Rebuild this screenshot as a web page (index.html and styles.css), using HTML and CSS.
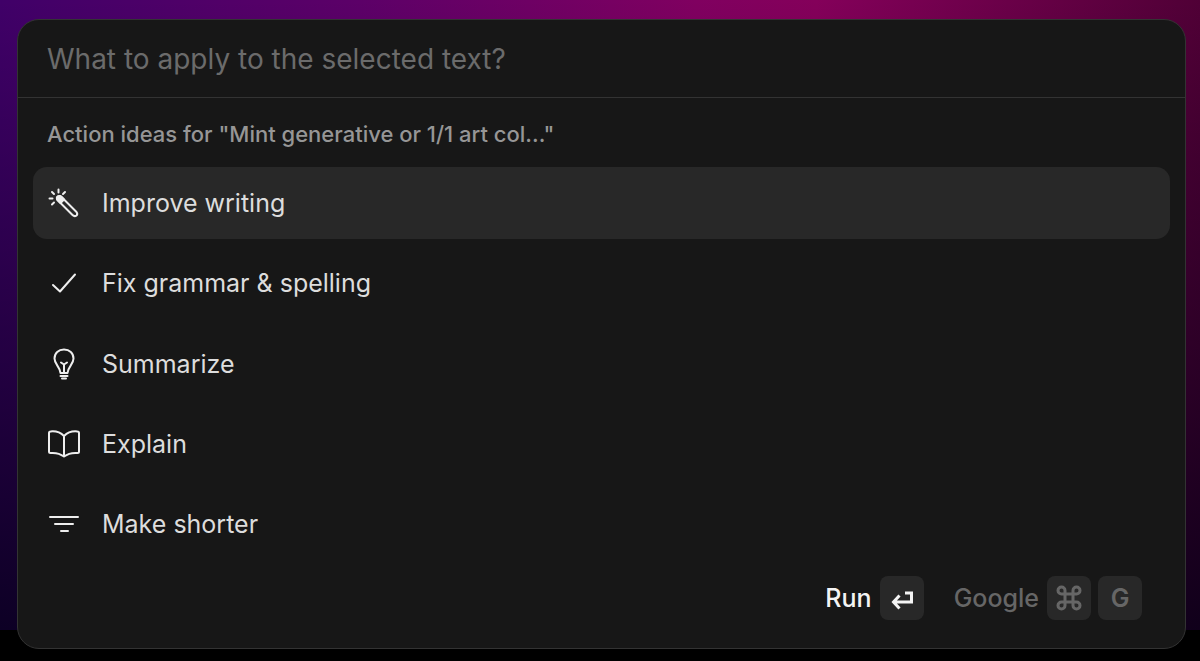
FILE: index.html
```html
<!DOCTYPE html>
<html lang="en">
  <head>
    <meta charset="UTF-8" />
    <meta name="viewport" content="width=device-width, initial-scale=1.0" />
    <title>Text actions</title>
    <link rel="stylesheet" href="styles.css">
  </head>
  <body>
    <main class="palette">
      <input type="text" class="search" aria-label="Action" placeholder="What to apply to the selected text?" />

      <section class="ideas">
        <h2 class="ideas-title">Action ideas for "Mint generative or 1/1 art col..."</h2>
        <ul class="actions">
          <li>
            <button type="button" class="action active">
              <svg class="icon" viewBox="0 0 32 32" aria-hidden="true">
                <path d="M9.500 13 Q8 10.500 10 9.500 Q12 8.500 13.500 10 L28.500 25 Q30 27 28.500 28.500 Q26.500 30 24.500 28 Z" />
                <path class="fill" d="M9.500 13 Q8 10.500 10 9.500 Q12 8.500 13.500 10 L16 12.500 L12.500 16 Z" />
                <path d="M10.500 2.500 V5.500 M4 5 L6 7 M1.500 11.500 H4.500 M4 17.500 L6 15.500 M17 5 L15 7" />
              </svg>
              Improve writing
            </button>
          </li>
          <li>
            <button type="button" class="action">
              <svg class="icon" viewBox="0 0 32 32" aria-hidden="true">
                <path d="M5 18 L12 24.500 L27 7.500" />
              </svg>
              Fix grammar &amp; spelling
            </button>
          </li>
          <li>
            <button type="button" class="action">
              <svg class="icon" viewBox="0 0 32 32" aria-hidden="true">
                <path d="M12.500 25 C12 18.500 6.500 16.500 6.500 10.500 C6.500 5 10.500 1.500 16 1.500 S25.500 5 25.500 10.500 C25.500 16.500 20 18.500 19.500 25 Z" />
                <path d="M13 14.500 L16 16.500 L19 14.500 M16 16.500 V24.500" />
                <path d="M12.500 28 H19.500 M14 30.500 H18" />
              </svg>
              Summarize
            </button>
          </li>
          <li>
            <button type="button" class="action">
              <svg class="icon" viewBox="0 0 32 32" aria-hidden="true">
                <path d="M16 8 C12 4 7 3 2.500 3.500 Q1 3.500 1 5 V23.500 Q1 25 2.500 25 C8 24.500 12 25.500 16 28.500 C20 25.500 24 24.500 29.500 25 Q31 25 31 23.500 V5 Q31 3.500 29.500 3.500 C25 3 20 4 16 8 Z M16 8 V28" />
              </svg>
              Explain
            </button>
          </li>
          <li>
            <button type="button" class="action">
              <svg class="icon" viewBox="0 0 32 32" aria-hidden="true">
                <path d="M2 9 H30 M7 16 H25 M13 23 H20" />
              </svg>
              Make shorter
            </button>
          </li>
        </ul>
      </section>

      <footer class="shortcuts">
        <button type="button" class="shortcut primary">
          Run
          <kbd class="key">
            <svg class="key-icon" viewBox="0 0 28 28" aria-hidden="true">
              <path d="M17 9 H23.500 V18 H6 M11.500 11.500 L5.500 18 L11.500 24.500" />
            </svg>
          </kbd>
        </button>
        <button type="button" class="shortcut">
          Google
          <span class="keys">
            <kbd class="key">
              <svg class="key-icon" viewBox="0 0 28 28" aria-hidden="true">
                <path d="M10 10 H18 V18 H10 Z M10 10 H6.500 A3.500 3.500 0 1 1 10 6.500 Z M18 10 V6.500 A3.500 3.500 0 1 1 21.500 10 Z M18 18 H21.500 A3.500 3.500 0 1 1 18 21.500 Z M10 18 V21.500 A3.500 3.500 0 1 1 6.500 18 Z" />
              </svg>
            </kbd>
            <kbd class="key">G</kbd>
          </span>
        </button>
      </footer>
    </main>
  </body>
</html>
```

FILE: styles.css
```css
* {
  box-sizing: border-box;
}
html {
  background-color: #000;
}
body {
  display: flex;
  min-height: 100vh;
  margin: 0;
  padding: 19px 14px 12px 17px;
  font-family: Inter, sans-serif;
  font-size: 25px;
  background-image: linear-gradient(rgba(0, 0, 20, 0), rgba(0, 0, 20, 0.8)),
    linear-gradient(90deg, #400068, #5c0068 30%, #800060 58%, #84005a 68%, #500036);
  background-size: 100% calc(100% - 31px);
  background-repeat: no-repeat;
}
button,
input {
  border: none;
  background: none;
  font: inherit;
}
.palette {
  display: flex;
  flex-direction: column;
  flex: 1;
  min-width: 0;
  border: 1px solid #333;
  border-radius: 22px;
  background-color: #171717;
  overflow: hidden;
}
.search {
  width: 100%;
  height: 78px;
  padding: 0 29px;
  border-bottom: 1px solid #333;
  color: #ddd;
  font-size: 28px;
  outline: none;
}
.search::placeholder {
  color: #6b6b6b;
  opacity: 1;
}
.ideas {
  display: flex;
  flex-direction: column;
  flex: 1;
  padding: 20px 15px 0;
}
.ideas-title {
  margin: 0 0 17px;
  padding: 0 14px;
  color: #969696;
  font-size: 22px;
  font-weight: 500;
  line-height: 32px;
}
.actions {
  display: flex;
  flex-direction: column;
  justify-content: space-between;
  gap: 8px;
  flex: 1;
  margin: 0;
  padding: 0;
  list-style: none;
}
.action {
  display: flex;
  align-items: center;
  gap: 22px;
  width: 100%;
  height: 72px;
  padding: 0 15px;
  border-radius: 14px;
  color: #ddd;
  text-align: left;
  cursor: pointer;
}
.action.active {
  background-color: #282828;
}
.icon {
  width: 32px;
  height: 32px;
  fill: none;
  stroke: #eee;
  stroke-width: 2;
  stroke-linecap: round;
  stroke-linejoin: round;
}
.icon .fill {
  fill: #eee;
}
.shortcuts {
  display: flex;
  justify-content: flex-end;
  gap: 30px;
  padding: 16px 43px 28px;
}
.shortcut {
  display: flex;
  align-items: center;
  gap: 8px;
  padding: 0;
  color: #666;
  font-weight: 500;
  cursor: pointer;
}
.shortcut.primary {
  color: #f4f4f4;
}
.keys {
  display: flex;
  gap: 7px;
}
.key {
  display: flex;
  align-items: center;
  justify-content: center;
  width: 44px;
  height: 44px;
  border-radius: 8px;
  background-color: #282828;
  font-family: inherit;
  font-size: 25px;
  font-weight: 600;
}
.key-icon {
  width: 28px;
  height: 28px;
  fill: none;
  stroke: currentColor;
  stroke-width: 3;
}
```
